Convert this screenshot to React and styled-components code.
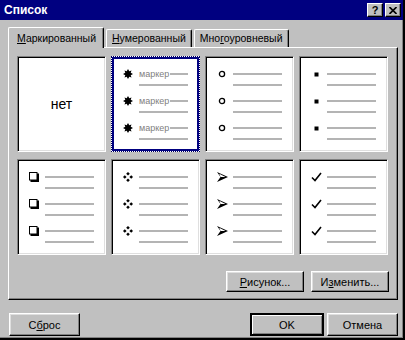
import styled, { createGlobalStyle } from "styled-components";

const GlobalStyle = createGlobalStyle`
  body {
    margin: 0;
    background: #c0c0c0;
    font-family: "Liberation Sans", Arial, sans-serif;
    font-size: 11px;
  }
`;

const Window = styled.div`
  width: 405px;
  height: 340px;
  box-sizing: border-box;
  background: #c0c0c0;
  border-right: 2px solid #000;
  border-bottom: 2px solid #000;
  box-shadow: inset -1px -1px #808080;
  display: flex;
  flex-direction: column;
  overflow: hidden;
`;

const TitleBar = styled.div`
  height: 20px;
  background: #000080;
  color: #fff;
  display: flex;
  align-items: center;
  justify-content: space-between;
  padding: 0 2px 0 4px;
  font-weight: bold;
  font-size: 12px;
`;

const TitleButtons = styled.div`
  display: flex;
  gap: 2px;
`;

const TitleButton = styled.div`
  width: 14px;
  height: 12px;
  background: #c0c0c0;
  border: 1px solid;
  border-color: #fff #000 #000 #fff;
  box-shadow: inset -1px -1px #808080;
  color: #000;
  font-size: 11px;
  font-weight: bold;
  display: flex;
  align-items: center;
  justify-content: center;
  line-height: 1;
`;

const Body = styled.div`
  flex: 1;
  padding: 7px 5px 0 8px;
  display: flex;
  flex-direction: column;
`;

const TabStrip = styled.div`
  display: flex;
  align-items: flex-end;
  height: 21px;
  position: relative;
  z-index: 1;
  margin-bottom: -1px;
  font-size: 10.5px;
`;

const Tab = styled.div`
  height: ${(p) => (p.$active ? "21px" : "18px")};
  box-sizing: border-box;
  padding: ${(p) => (p.$active ? "4px 7px 0 8px" : "2px 5px 0 5px")};
  margin: ${(p) => (p.$active ? "0" : "0 0 1px 2px")};
  background: #c0c0c0;
  border-top: 1px solid #fff;
  border-left: 1px solid #fff;
  border-right: 1px solid #000;
  border-radius: 2px 2px 0 0;
  box-shadow: inset -1px 0 #808080;
  color: #000;
  white-space: nowrap;
`;

const Panel = styled.div`
  height: 253px;
  box-sizing: border-box;
  border: 1px solid;
  border-color: #fff #000 #000 #fff;
  box-shadow: inset -1px -1px #808080;
  padding: 8px 8px 0 8px;
  display: flex;
  flex-direction: column;
`;

const Grid = styled.div`
  display: grid;
  grid-template-columns: repeat(4, 89px);
  grid-template-rows: repeat(2, 96px);
  column-gap: 5px;
  row-gap: 7px;
`;

const Cell = styled.div`
  box-sizing: border-box;
  background: #fff;
  border: 1px solid;
  border-color: #808080 #fff #fff #808080;
  box-shadow: inset 1px 1px #000, inset -1px -1px #dfdfdf;
  padding: 11px 0 0 10px;
  display: flex;
  flex-direction: column;

  ${(p) =>
    p.$selected &&
    `
    border: 1px dotted #000060;
    box-shadow: inset 0 0 0 2px #000080, inset 0 0 0 3px #fff;
  `}

  ${(p) =>
    p.$center &&
    `
    align-items: center;
    justify-content: center;
    padding: 0;
    font-size: 14px;
  `}
`;

const Item = styled.div`
  height: 27px;
  display: flex;
`;

const BulletBox = styled.div`
  width: 12px;
  height: 12px;
  margin-right: 5px;
  display: flex;
  align-items: center;
  justify-content: center;
`;

const Lines = styled.div`
  display: flex;
  flex-direction: column;
  gap: 9px;
  padding-top: 5px;
`;

const FirstLine = styled.div`
  display: flex;
  align-items: center;
  height: 2px;
  width: 49px;
`;

const Marker = styled.span`
  font-size: 9px;
  color: #808080;
  margin-right: 1px;
  line-height: 1;
`;

const InlineRule = styled.div`
  height: 2px;
  flex: 1;
  background: #b4b4b4;
`;

const Rule = styled.div`
  height: 2px;
  width: 49px;
  background: #b4b4b4;
`;

const ButtonRow = styled.div`
  display: flex;
  justify-content: flex-end;
  gap: 7px;
  margin-top: 16px;
`;

const Button = styled.div`
  width: ${(p) => p.$w || 78}px;
  height: ${(p) => p.$h || 21}px;
  box-sizing: border-box;
  background: #c0c0c0;
  border: 1px solid;
  border-color: #fff #000 #000 #fff;
  box-shadow: inset -1px -1px #808080, inset 1px 1px #dfdfdf;
  display: flex;
  align-items: center;
  justify-content: center;
  color: #000;

  ${(p) =>
    p.$default &&
    `
    border: 2px solid #000;
    box-shadow: inset 1px 1px #fff, inset -1px -1px #808080;
  `}
`;

const Footer = styled.div`
  display: flex;
  align-items: center;
  margin-top: 13px;
  padding-left: 1px;
  gap: 3px;
`;

const Spacer = styled.div`
  flex: 1;
`;

const Star = () => (
  <svg width="10" height="10" viewBox="0 0 10 10">
    <polygon
      points="5,0 6.3,2.3 8.5,1.5 7.7,3.7 10,5 7.7,6.3 8.5,8.5 6.3,7.7 5,10 3.7,7.7 1.5,8.5 2.3,6.3 0,5 2.3,3.7 1.5,1.5 3.7,2.3"
      fill="#000"
    />
  </svg>
);

const Circle = () => (
  <svg width="8" height="8" viewBox="0 0 8 8">
    <circle cx="4" cy="4" r="2.6" fill="none" stroke="#000" strokeWidth="1.3" />
  </svg>
);

const Square = () => (
  <svg width="5" height="5" viewBox="0 0 5 5">
    <rect x="0.5" y="0.5" width="4" height="4" fill="#000" />
  </svg>
);

const ShadowBox = () => (
  <svg width="10" height="10" viewBox="0 0 10 10">
    <rect x="1.5" y="1.5" width="8.5" height="8.5" fill="#000" />
    <rect x="0.5" y="0.5" width="7.5" height="7.5" fill="#fff" stroke="#000" />
  </svg>
);

const Diamonds = () => (
  <svg width="10" height="10" viewBox="0 0 10 10">
    <polygon points="5,0 6.8,1.8 5,3.6 3.2,1.8" fill="#000" />
    <polygon points="5,6.4 6.8,8.2 5,10 3.2,8.2" fill="#000" />
    <polygon points="0,5 1.8,3.2 3.6,5 1.8,6.8" fill="#000" />
    <polygon points="6.4,5 8.2,3.2 10,5 8.2,6.8" fill="#000" />
  </svg>
);

const Arrow = () => (
  <svg width="11" height="10" viewBox="0 0 11 10">
    <polygon points="0,0 11,5 0,10 3.5,5" fill="#000" />
    <polygon points="2.2,1.8 8.5,5 3.5,5" fill="#fff" />
  </svg>
);

const Check = () => (
  <svg width="11" height="10" viewBox="0 0 11 10">
    <path d="M1 5.5 L4 8.5 L10 1" fill="none" stroke="#000" strokeWidth="1.6" />
  </svg>
);

function BulletList({ icon: Icon, marker }) {
  return [0, 1, 2].map((i) => (
    <Item key={i}>
      <BulletBox>
        <Icon />
      </BulletBox>
      <Lines>
        <FirstLine>
          {marker && <Marker>маркер</Marker>}
          <InlineRule />
        </FirstLine>
        <Rule />
      </Lines>
    </Item>
  ));
}

export default function App() {
  return (
    <>
      <GlobalStyle />
      <Window>
        <TitleBar>
          <span>Список</span>
          <TitleButtons>
            <TitleButton>?</TitleButton>
            <TitleButton>
              <svg width="8" height="7" viewBox="0 0 8 7">
                <path d="M0.5 0 L7.5 7 M7.5 0 L0.5 7" stroke="#000" strokeWidth="1.6" />
              </svg>
            </TitleButton>
          </TitleButtons>
        </TitleBar>
        <Body>
          <TabStrip>
            <Tab $active>
              <u>М</u>аркированный
            </Tab>
            <Tab>
              <u>Н</u>умерованный
            </Tab>
            <Tab>
              Мно<u>г</u>оуровневый
            </Tab>
          </TabStrip>
          <Panel>
            <Grid>
              <Cell $center>нет</Cell>
              <Cell $selected>
                <BulletList icon={Star} marker />
              </Cell>
              <Cell>
                <BulletList icon={Circle} />
              </Cell>
              <Cell>
                <BulletList icon={Square} />
              </Cell>
              <Cell>
                <BulletList icon={ShadowBox} />
              </Cell>
              <Cell>
                <BulletList icon={Diamonds} />
              </Cell>
              <Cell>
                <BulletList icon={Arrow} />
              </Cell>
              <Cell>
                <BulletList icon={Check} />
              </Cell>
            </Grid>
            <ButtonRow>
              <Button>
                <span>
                  <u>Р</u>исунок...
                </span>
              </Button>
              <Button>
                <span>
                  И<u>з</u>менить...
                </span>
              </Button>
            </ButtonRow>
          </Panel>
          <Footer>
            <Button $w={71} $h={23}>
              <span>
                С<u>б</u>рос
              </span>
            </Button>
            <Spacer />
            <Button $w={74} $h={23} $default>
              OK
            </Button>
            <Button $w={71} $h={23}>
              Отмена
            </Button>
          </Footer>
        </Body>
      </Window>
    </>
  );
}
